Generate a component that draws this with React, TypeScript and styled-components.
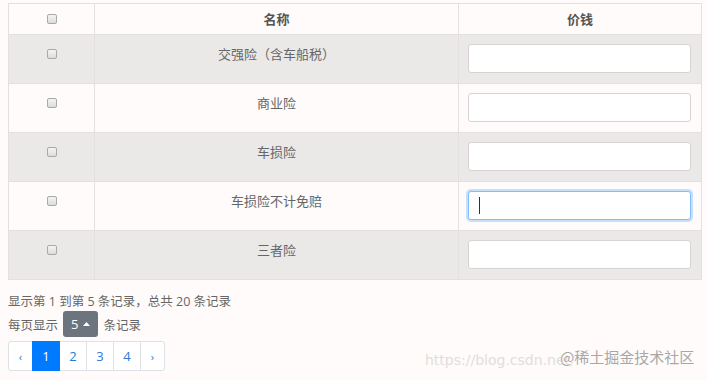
import React from 'react';
import styled, { createGlobalStyle } from 'styled-components';

const GlobalStyle = createGlobalStyle`
  body {
    margin: 0;
    background: #fefbfa;
    font-family: "Open Sans", "Noto Sans CJK SC", sans-serif;
    color: #666;
    text-spacing-trim: space-all;
  }
`;

const Page = styled.div`
  position: relative;
  width: 707px;
  height: 380px;
  padding: 3px 5px 0 8px;
  box-sizing: border-box;
  overflow: hidden;
`;

const Table = styled.table`
  width: 694px;
  border-collapse: collapse;
  table-layout: fixed;
  border: 1px solid #e4e0df;
  font-size: 13px;
`;

const HeadCell = styled.th`
  padding: 6px 10px;
  line-height: 18px;
  font-weight: 700;
  color: #555;
  text-align: center;
  border: 1px solid #e4e0df;
`;

const Row = styled.tr<{ $odd: boolean }>`
  background: ${p => (p.$odd ? '#ebe9e8' : '#fefbfa')};
`;

const Cell = styled.td`
  padding: 10px 10px;
  height: 28px;
  line-height: 18px;
  vertical-align: top;
  text-align: center;
  border: 1px solid #e4e0df;
  color: #666;
`;

const InputCell = styled(Cell)`
  padding: 9px 10px 10px 9px;
  height: 29px;
`;

const Check = styled.input.attrs({ type: 'checkbox' })`
  appearance: none;
  width: 10px;
  height: 10px;
  margin: 4px 0 0;
  border: 1px solid #a9a9a9;
  border-radius: 2px;
  background: linear-gradient(#f4f4f4, #dcdcdc);
  vertical-align: top;
`;

const InputWrap = styled.div`
  position: relative;
`;

const PriceInput = styled.input<{ $focus?: boolean }>`
  display: block;
  width: 100%;
  height: 29px;
  box-sizing: border-box;
  border: 1px solid ${p => (p.$focus ? '#80bdff' : '#d6d3d2')};
  border-radius: 3px;
  background: #fff;
  box-shadow: ${p => (p.$focus ? '0 0 0 2px rgba(0,123,255,.22)' : 'none')};
  outline: none;
  font-size: 13px;
  padding: 4px 10px;
`;

const Caret = styled.span`
  position: absolute;
  left: 11px;
  top: 6px;
  width: 1px;
  height: 17px;
  background: #333;
`;

const Info = styled.div`
  margin-top: 13px;
  font-size: 12.5px;
  line-height: 18px;
  color: #666;
`;

const PerPage = styled.div`
  display: flex;
  align-items: center;
  gap: 5px;
  font-size: 12.5px;
  color: #666;
`;

const SizeButton = styled.span`
  display: inline-flex;
  align-items: center;
  gap: 5px;
  height: 26px;
  padding: 0 8px;
  background: #6c757d;
  color: #fff;
  border-radius: 3px;
  font-size: 13px;
`;

const Pager = styled.ul`
  display: flex;
  list-style: none;
  margin: 4px 0 0;
  padding: 0;
`;

const PageItem = styled.li<{ $active?: boolean; $narrow?: boolean }>`
  width: ${p => (p.$narrow ? 25 : 28)}px;
  height: 30px;
  box-sizing: border-box;
  display: flex;
  align-items: center;
  justify-content: center;
  margin-left: -1px;
  border: 1px solid ${p => (p.$active ? '#007bff' : '#dee2e6')};
  background: ${p => (p.$active ? '#007bff' : '#fff')};
  color: ${p => (p.$active ? '#fff' : '#2a7ad4')};
  font-size: ${p => (p.$narrow ? 11 : 13)}px;
  position: relative;
  z-index: ${p => (p.$active ? 1 : 0)};
  &:first-child {
    margin-left: 0;
    border-radius: 3px 0 0 3px;
  }
  &:last-child {
    border-radius: 0 3px 3px 0;
  }
`;

const WatermarkUrl = styled.span`
  position: absolute;
  left: 425px;
  top: 352px;
  font-family: "DejaVu Sans", sans-serif;
  font-size: 14px;
  color: #e0dedd;
`;

const WatermarkTag = styled.span`
  position: absolute;
  left: 560px;
  top: 346px;
  font-family: "Noto Sans CJK SC", sans-serif;
  font-size: 15px;
  color: #a9a7a6;
  text-shadow: 0 0 1px #fff, 0 0 1px #fff;
`;

const rows = ['交强险（含车船税）', '商业险', '车损险', '车损险不计免赔', '三者险'];

export default function App() {
  return (
    <>
      <GlobalStyle />
      <Page>
        <Table>
          <colgroup>
            <col style={{ width: 86 }} />
            <col style={{ width: 364 }} />
            <col />
          </colgroup>
          <thead>
            <tr>
              <HeadCell><Check /></HeadCell>
              <HeadCell>名称</HeadCell>
              <HeadCell>价钱</HeadCell>
            </tr>
          </thead>
          <tbody>
            {rows.map((name, i) => (
              <Row key={name} $odd={i % 2 === 0}>
                <Cell><Check /></Cell>
                <Cell>{name}</Cell>
                <InputCell>
                  <InputWrap>
                    <PriceInput $focus={i === 3} readOnly />
                    {i === 3 && <Caret />}
                  </InputWrap>
                </InputCell>
              </Row>
            ))}
          </tbody>
        </Table>
        <Info>显示第 1 到第 5 条记录，总共 20 条记录</Info>
        <PerPage>
          每页显示
          <SizeButton>
            5
            <svg width="7" height="4" viewBox="0 0 7 4"><path d="M0 4 L3.5 0 L7 4 Z" fill="#fff" /></svg>
          </SizeButton>
          条记录
        </PerPage>
        <Pager>
          <PageItem $narrow>‹</PageItem>
          <PageItem $active>1</PageItem>
          <PageItem>2</PageItem>
          <PageItem>3</PageItem>
          <PageItem>4</PageItem>
          <PageItem $narrow>›</PageItem>
        </Pager>
        <WatermarkUrl>https://blog.csdn.net/</WatermarkUrl>
        <WatermarkTag>@稀土掘金技术社区</WatermarkTag>
      </Page>
    </>
  );
}
